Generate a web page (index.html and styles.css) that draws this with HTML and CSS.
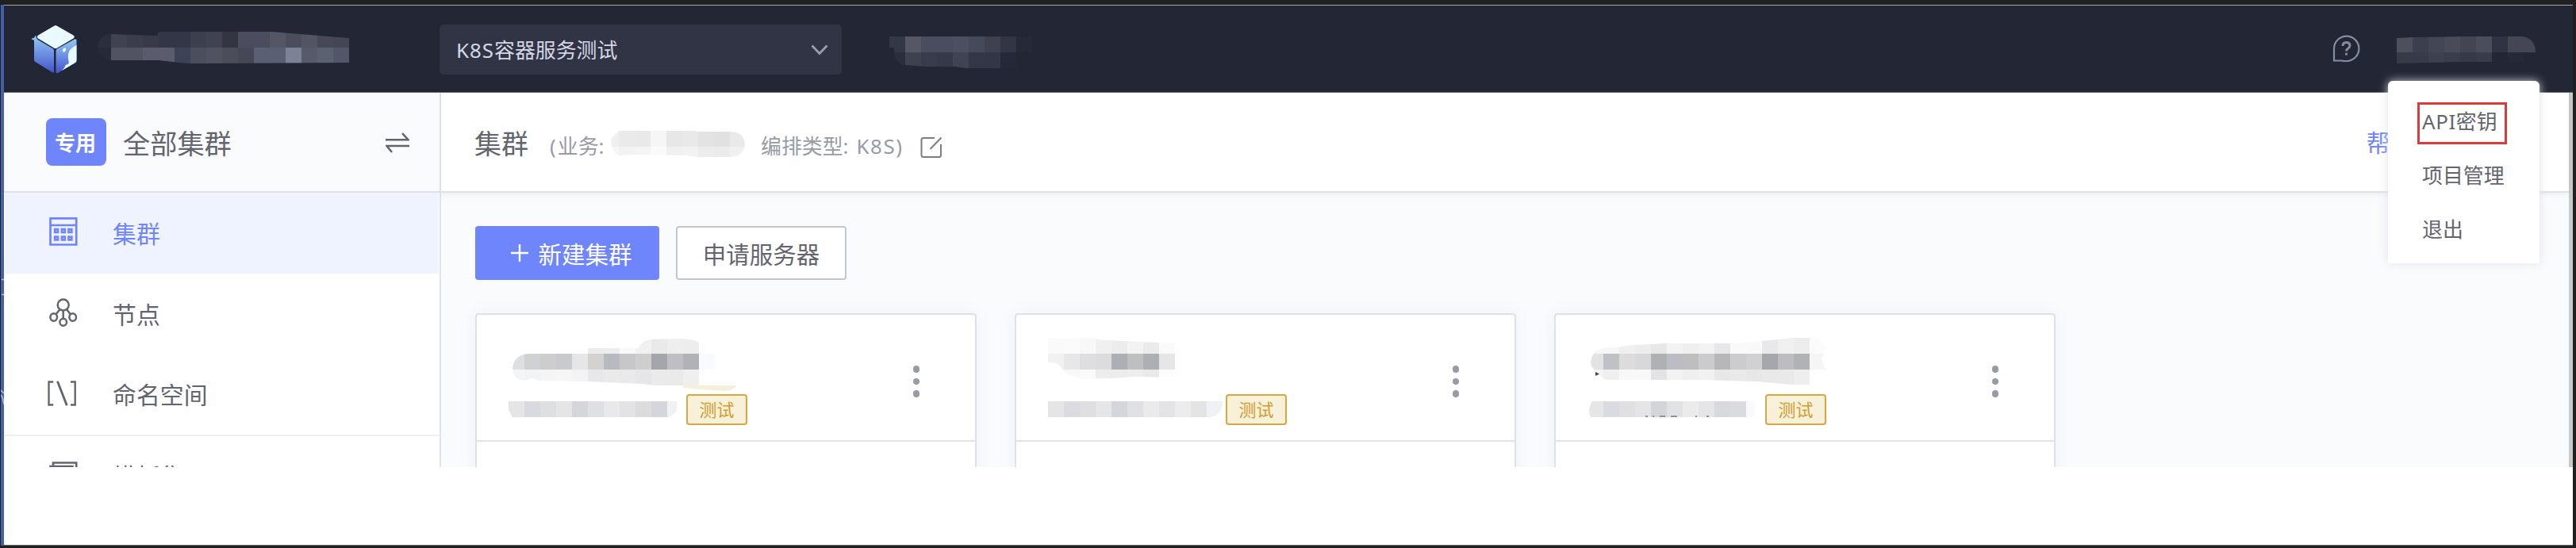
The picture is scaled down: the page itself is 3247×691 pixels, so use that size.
FILE: index.html
```html
<!DOCTYPE html>
<html lang="zh-CN">
<head>
<meta charset="utf-8">
<title>K8S容器服务</title>
<link rel="stylesheet" href="styles.css">
</head>
<body>
<div class="frame">
  <div class="edge">
    <svg width="5" height="681" viewBox="0 0 5 681" fill="none" stroke="#b9c3de" stroke-width="1.5"><path d="M1 346.500H5M1 365.500H5M0 486L4 490M0 492Q3 495 3 500L5 506"/></svg>
  </div>
  <div class="app">
    <header class="topbar">
      <svg class="logo" width="58" height="62" viewBox="0 0 58 62">
        <defs><linearGradient id="lf" x1="0" y1="0" x2="0" y2="1"><stop offset="0" stop-color="#93c8f7"/><stop offset=".5" stop-color="#6c8fe2"/><stop offset="1" stop-color="#4454cd"/></linearGradient></defs>
        <path fill="#e9fbff" d="M29.500 1.500Q31 .5 33 1.700L53.500 13.500Q56 15.500 53.500 17.500L33 29.500Q31 30.700 29 29.500L9 17.500Q6.500 15.500 9 13.500Z"/>
        <path fill="url(#lf)" d="M6 13.500L7 17Q8.500 19.500 11 20.500L28 30.500Q29 31.500 29 33V59Q29 61.500 27 60.300L5.500 47Q4 46 4 44.500V20L0 18L4 16.500Z"/>
        <path fill="url(#lf)" d="M55 18.500Q57.500 17.500 57.500 20V45Q57.500 47 56 48L34 61Q31.500 62 31.500 59.500V33Q31.500 31.500 33 30.500Z"/>
        <path fill="#e9fbff" d="M57.500 26V45Q57.500 47 56 48L39 58Q43 54 43.500 51Q49 50 47.500 46Q45.500 37 49.500 31.500Q52.500 28 57.500 26Z"/>
        <ellipse cx="42" cy="32" rx="1.900" ry="2.800" fill="#e9fbff" transform="rotate(25 42 32)"/>
      </svg>
      <svg class="mosaic product-name" data-mosaic="product"></svg>
      <div class="project-select"><span><span class="latin">K8S</span>容器服务测试</span>
        <svg width="22" height="14" viewBox="0 0 22 14" fill="none" stroke="#9a9daa" stroke-width="2.800"><path d="M1.500 1.500L11 11.500L20.500 1.500"/></svg>
      </div>
      <svg class="mosaic nav-name" data-mosaic="nav"></svg>
      <svg class="help" width="35" height="35" viewBox="0 0 35 35" fill="none" stroke="#858da3" stroke-width="2.200"><path d="M2 32.500V17A15.700 15.700 0 1 1 17.500 33H14L12 32.500Z"/><path stroke-width="3" d="M13 14Q13 9.500 17.500 9.500T22 13.500Q22 15.500 19.500 17.200Q17.500 18.500 17.500 20.500M17.500 22.800V25.500"/></svg>
      <svg class="mosaic user-name" data-mosaic="user"></svg>
    </header>
    <div class="main">
      <aside class="sidebar">
        <div class="side-head">
          <span class="badge">专用</span><span class="side-title">全部集群</span>
          <svg width="30" height="26" viewBox="0 0 30 26" fill="none" stroke="#63656e" stroke-width="2.500"><path d="M0 9.200H28.500L21 1M30 17H1.500L8 25"/></svg>
        </div>
        <nav>
          <a class="item active">
            <svg width="36" height="36" viewBox="0 0 36 36" fill="none" stroke="#6f85fb" stroke-width="2.700"><path d="M1.500 1.300H34.200V34.500H1.500ZM1.500 10H34.500"/><path d="M7.200 15.200h3.800v3.800h-3.800zM16 15.200h3.800v3.800h-3.800zM24.500 15.200h3.800v3.800h-3.800zM7.200 24.600h3.800v3.800h-3.800zM16 24.600h3.800v3.800h-3.800zM24.500 24.600h3.800v3.800h-3.800z"/></svg>
            <span>集群</span></a>
          <a class="item">
            <svg width="36" height="36" viewBox="0 0 36 36" fill="none" stroke="#63656e" stroke-width="2.500"><circle cx="17.700" cy="8.500" r="7"/><ellipse cx="5.700" cy="24" rx="4.300" ry="4.700"/><ellipse cx="29.700" cy="24" rx="4.300" ry="4.700"/><ellipse cx="17.700" cy="30.300" rx="4.300" ry="4.500"/><path d="M13.500 14L8.500 20.500M22 14L27 20.500M17.700 15.500V26"/></svg>
            <span>节点</span></a>
          <a class="item">
            <svg width="38" height="36" viewBox="0 0 38 36" fill="none" stroke="#63656e" stroke-width="2.500"><path d="M5.500 2.700H-.5V33.300H5.500M28.500 2.700H34.500V33.300H28.500"/><path stroke-width="3" d="M11 2L23.500 34"/></svg>
            <span>命名空间</span></a>
          <a class="item divided">
            <svg width="36" height="36" viewBox="0 0 36 36" fill="none" stroke="#63656e" stroke-width="2.600"><path d="M1.500 6V34.500H29.500V6ZM5 5.500V1.500H34.200V29H30"/></svg>
            <span>模板集</span></a>
        </nav>
      </aside>
      <section class="content">
        <div class="page-head">
          <h1>集群</h1>
          <span class="meta biz"><span class="latin">(</span>业务:</span>
          <svg class="mosaic biz-name" data-mosaic="biz"></svg>
          <span class="meta type">编排类型<span class="latin">: K8S)</span></span>
          <svg class="edit" width="28" height="28" viewBox="0 0 28 28" fill="none" stroke="#7a7d87" stroke-width="2"><path d="M18 2H4Q1.500 2 1.500 4.500V23.500Q1.500 26 4 26H23.500Q26 26 26 23.500V10M26.500 1.500L12.500 16"/></svg>
          <a class="guide">帮助</a>
        </div>
        <div class="actions">
          <button class="btn primary"><svg width="22" height="22" viewBox="0 0 22 22" stroke="#fff" stroke-width="2.400"><path d="M11 0V22M0 11H22"/></svg>新建集群</button>
          <button class="btn">申请服务器</button>
        </div>
        <div class="cards">
          <article class="card"><div class="card-head">
            <svg class="mosaic cluster-info" data-mosaic="c1"></svg><span class="tag">测试</span>
            <span class="dots"><i></i><i></i><i></i></span></div></article>
          <article class="card"><div class="card-head">
            <svg class="mosaic cluster-info" data-mosaic="c2"></svg><span class="tag">测试</span>
            <span class="dots"><i></i><i></i><i></i></span></div></article>
          <article class="card"><div class="card-head">
            <svg class="mosaic cluster-info" data-mosaic="c3"></svg><span class="tag">测试</span>
            <span class="dots"><i></i><i></i><i></i></span></div></article>
        </div>
      </section>
      <div class="scrollbar"></div>
    </div>
  </div>
</div>
<div class="user-menu">
  <a><span class="marked"><span class="api">API</span>密钥</span></a>
  <a>项目管理</a>
  <a>退出</a>
</div>
<script src="mosaic.js"></script>
</body>
</html>
```

FILE: styles.css
```css
* { box-sizing: border-box; }
body {
  margin: 0; width: 3247px; height: 691px; overflow: hidden; position: relative;
  background: #202020; color: #63656e;
  font-family: "Noto Sans", "Noto Sans CJK SC", sans-serif;
}
svg { display: block; flex: none; }
.frame { display: flex; padding: 6px 4px 3px 1px; height: 691px; }
.edge { width: 4px; flex: none; background: #4560a8; overflow: hidden; }
.app { flex: 1; min-width: 0; background: #fff; border-top: 1px solid #a5a6ae; border-bottom: 1px solid #666; }
.topbar { height: 110px; background: #232634; display: flex; align-items: flex-start; border-bottom: 1px solid #6d6f7a; }
.logo { margin: 24px 0 0 34px; }
.product-name { margin: 33px 0 0 26px; }
.project-select {
  margin: 24px 0 0 111px; width: 507px; height: 63px; border-radius: 5px; background: #313445;
  display: flex; align-items: center; justify-content: space-between; padding: 0 17px 0 21px;
  font-size: 25.9px; color: #d5d8e4; line-height: 40px;
}
.latin { letter-spacing: 1px; }
.nav-name { margin: 39px 0 0 60px; }
.help { margin: 37px 0 0 auto; }
.user-name { margin: 39px 47px 0 46px; }

.main { height: 472px; display: flex; overflow: hidden; }
.sidebar { width: 551px; flex: none; border-right: 2px solid #e2e4ec; background: #fff; }
.side-head { height: 126px; border-bottom: 2px solid #e0e2e9; background: #fafbfd; display: flex; align-items: center; padding: 0 38px 0 53px; }
.side-head svg { margin-top: 1px; }
.badge { width: 76px; height: 60px; border-radius: 8px; background: #6f85fb; color: #fff; font-weight: 700; font-size: 26px; line-height: 60px; text-align: center; padding: 1px 2px 0 0; }
.side-title { margin: 3px auto 0 21px; font-size: 34.2px; line-height: 50px; }
.item { display: flex; align-items: center; height: 101.7px; padding-left: 56px; font-size: 29.9px; margin-left: 1px; margin-right: 1px; }
.item svg { margin-top: -3px; width: 36px; overflow: visible; }
.item span { margin: 2px 0 0 44px; line-height: 44px; }
.active { background: #eff3ff; color: #6f85fb; }
.divided { border-top: 2px solid #eff0f6; height: 106px; }
.divided svg { margin-top: -4px; }
.divided span { margin-top: -2px; }

.content { flex: 1; min-width: 0; background: #fafbfd; }
.page-head { height: 126px; background: #fff; border-bottom: 2px solid #dfe1e9; box-shadow: 0 3px 6px rgba(60,70,100,.07); display: flex; align-items: center; padding-left: 42px; position: relative; }
h1 { margin: 3px 0 0; font-size: 34px; font-weight: 400; line-height: 50px; }
.meta { font-size: 25.9px; color: #979ba5; line-height: 40px; margin-top: 9px; white-space: nowrap; }
.biz { margin-left: 27px; width: 77px; }
.biz .latin { letter-spacing: 2px; }
.biz-name { margin-right: 20px; margin-top: 6px; }
.type { width: 178px; }
.type .latin { letter-spacing: 1.6px; }
.edit { margin: 14px 0 0 23px; }
.guide { margin: 1px 196px 0 auto; color: #6f85fb; font-size: 29.7px; line-height: 44px; }
.actions { display: flex; gap: 21px; padding: 42px 0 0 43px; }
.btn { height: 68px; width: 215px; border: 2px solid #c4c6cc; border-radius: 4px; background: #fff; color: #63656e; font: 29.5px/44px "Noto Sans", "Noto Sans CJK SC", sans-serif; display: flex; align-items: center; justify-content: center; padding: 3px 0 0; }
.btn.primary { width: 232px; background: #6f85fb; border-color: #6f85fb; color: #fff; gap: 12px; padding-left: 11px; }
.btn svg { margin-top: -3px; }
.cards { display: grid; grid-template-columns: repeat(3, 632px); gap: 48px; padding: 42px 0 0 43px; }
.card { height: 260px; background: #fff; border: 2px solid #e0e1e8; border-radius: 4px; box-shadow: 0 0 24px rgba(70,85,130,.06); }
.card-head { height: 160px; border-bottom: 2px solid #e2e3e9; display: flex; padding-left: 40px; }
.cluster-info { margin-top: 23px; }
.tag { margin: 100px 0 0 -36px; width: 77px; height: 39px; border: 2px solid #d9a741; border-radius: 4px; background: #f8f1d9; color: #d29b2d; font-size: 22px; line-height: 35px; text-align: center; }
.dots { margin: 64px 70px 0 auto; display: flex; flex-direction: column; gap: 7.200px; }
.dots i { width: 8.500px; height: 8.500px; border-radius: 50%; background: #979ba5; }
.scrollbar { width: 5px; flex: none; background: #c9c9c9; }

.user-menu { position: absolute; left: 3010px; top: 102px; width: 191px; height: 230px; padding-top: 18px; background: #fff; border-radius: 6px 6px 2px 2px; box-shadow: 0 0 12px rgba(222,224,232,.9); font-size: 25.9px; }
.user-menu a { display: flex; align-items: center; height: 67.5px; padding-left: 43px; line-height: 40px; }
.marked { margin-left: -6px; margin-top: 3px; width: 113px; height: 53px; border: 3px solid #dd3a3a; padding: 0 0 0 3px; line-height: 42px; white-space: nowrap; }
.api { letter-spacing: .6px; }
```

FILE: mosaic.js
```js
// Each masked label: viewBox, outline of the brush stroke, rows of cells [x, y, height, colours].
const masks = {
  product: { box: [123, 40, 320, 42], clip: 'M123 60Q124 43 142 43L198 45L200 40H342L440 48V79L235 80L200 76L140 76Q124 74 123 60Z', rows: [
    [120, 40, 20, '#2b2e3e #404251 #3b3d4c #373a49 #333646 #333646 #3c3f4d #3f424f #333640 #4b4d5f #4b4d5f #545663 #4b4d5a #525464 #464856 #444654'],
    [120, 60, 20, '#262938 #515363 #515363 #5a5c6d #5a5c6d #3e4257 #4b4e5c #505260 #4b4d5b #454854 #5b5f73 #5b5f73 #7d8196 #575a6b #5b6170 #53566a #5f606e']] },
  nav: { box: [1121, 46, 180, 40], clip: 'M1121 46H1301V66H1281V86H1217L1205 84H1166L1141 82Q1128 80 1127 66V60H1121Z', rows: [
    [1121, 46, 20, '#343747 #555766 #4a4c60 #4a4c60 #4c4e62 #464959 #3f4150 #323546 #262937'],
    [1121, 66, 20, '#2b2f3c #3c424e #393c4c #363949 #404354 #343748 #333646 #242839 #232634']] },
  user: { box: [3021, 46, 175, 34], clip: 'M3021 48L3041 47L3103 46H3180Q3196 49 3196 66L3182 78H3103L3021 80Z', rows: [
    [3021, 46, 20, '#4d4f5d #3c3f4f #434654 #494b59 #434552 #4b4d5a #303344 #444753 #444753'],
    [3021, 66, 14, '#373a47 #373a48 #3d4051 #3a3d4b #363947 #393c49 #232634 #262938 #232634']] },
  biz: { box: [771, 166, 169, 34], clip: 'M781 166H878L879 167H922Q938 167 940 183Q938 199 920 199H880L866 197L801 196L780 197Q771 192 771 176Z', rows: [
    [761, 166, 20, '#efefef #eaeaea #e9e9e9 #f5f6f5 #e7e7e7 #e9e9e9 #e3e3e4 #e1e1e1 #e9e9ea'],
    [761, 186, 14, '#f6f6f6 #f2f2f2 #f4f4f4 #fafafa #eff1f0 #f2f2f2 #ececed #ebebeb #eff0f3']] },
  c1: { box: [641, 420, 260, 120], clip: 'M646 466Q647 448 665 446H741V439H804Q810 429 820 428L860 427Q876 428 881 432V446H901V466H881V486H929Q924 493 914 493L883 491L861 489V486H826L810 484L740 481L680 480L672 477L660 480Q647 478 646 466ZM641 506H853Q856 523 842 526H646L641 517Z', rows: [
    [641, 426, 20, '#fff #fff #fff #fff #fff #ececed #ededef #f9f9f9 #f1f1f1 #e9e9e9 #eeeeef #ededed #fff'],
    [641, 446, 20, '#dedfe0 #d0d1d2 #cdcdcd #c9cace #e6e6e9 #d4d1d1 #b8bac1 #c7c7c9 #cececf #a5a6ac #bebec4 #b1b2b7 #f9fafd'],
    [641, 466, 20, '#f5f5f5 #f2f3f4 #f4f5f4 #f6f6f7 #f3f3f3 #e8e8ea #eaeaea #e9e9eb #e6e6e8 #eaeaea #eaeaea #efefef #fff'],
    [861, 486, 10, '#f6efdc #f6efdc #f6efdc #f6efdc'],
    [641, 506, 20, '#e5e5e6 #d9dadf #dedfe0 #e5e5e6 #d5d6db #dfe0e3 #e9e9eb #e3e3e6 #dcdcdd #d5d6db #f0f1f4']] },
  c2: { box: [1321, 420, 260, 120], clip: 'M1321 427L1370 426L1395 429L1481 433V476L1430 475L1400 477L1362 478L1352 473Q1340 472 1337 462Q1334 457 1321 457ZM1321 506H1541Q1541 524 1525 526H1321Z', rows: [
    [1321, 426, 20, '#fafafa #fbfbfb #f7f9f8 #f0f0f0 #ececed #f3f3f3 #ebebeb #fafafa'],
    [1321, 446, 20, '#f1f1f1 #e7e7e7 #dedee1 #dcdcdf #aeafb4 #bfbfc1 #aeafb4 #e6e6e6'],
    [1321, 466, 20, '#fff #f8f8f8 #fafafa #ededed #ececec #ededed #e9e9e9 #fdfdfd'],
    [1321, 506, 20, '#e5e5e6 #dbdce1 #dfdfe2 #e6e6e9 #d5d6db #e0e0e4 #eaeaeb #e4e4e7 #ececec #e4e4e6 #f0f1f4']] },
  c3: { box: [2001, 420, 260, 120], clip: 'M2005 455Q2008 440 2023 439L2060 435L2100 433H2180L2221 430L2260 426H2281Q2301 426 2301 440L2296 453L2301 466H2281V485H2258L2215 481L2140 479H2028Q2018 478 2013 469Q2004 463 2005 455ZM2007 506H2210Q2215 516 2210 526H2005Q2000 516 2007 506Z', rows: [
    [2001, 426, 20, '#f6f6f6 #f6f6f6 #f0f0f0 #ededed #e7e7e7 #f3f3f3 #efefef #f2f2f2 #e7e7e9 #f9f9f9 #f9f9f9 #e8e8ea #f0f0f0 #ededed #fcfcfc'],
    [2001, 446, 20, '#e3e3e4 #c0c1c6 #dcdcdd #d8d8db #b0b1b5 #bdbcc2 #bebec0 #cbcbcd #b7b7ba #cccccf #d1d1d3 #a6a7ac #bdbcc2 #b1b2b6 #f5f5f6'],
    [2001, 466, 20, '#f4f4f4 #efefef #f8f8f8 #f8f8f8 #e3e3e6 #f2f2f2 #efefef #f1f1f1 #e8e8e8 #e9e9e9 #e7e7e7 #e9e9e9 #e9e9e9 #eee #fff'],
    [2001, 506, 20, '#e6e6e7 #dadbe0 #e0e0e2 #e5e5e8 #d4d5d9 #e2e2e5 #ebebec #e5e5e8 #d8d9de #dadbe0 #f8faf9']],
    extra: '<path fill="#3f414a" d="M2011 469l5 2.500l-5 2.500z"/><path stroke="#8f929c" stroke-width="2" fill="none" d="M2074 525h3M2083 525h2M2092 525h7M2106 525h8M2137 525h2M2151 525h3"/>' }
};
let id = 0;
for (const svg of document.querySelectorAll('[data-mosaic]')) {
  const m = masks[svg.dataset.mosaic], [x, y, w, h] = m.box, clip = 'mask' + id++;
  svg.setAttribute('viewBox', m.box.join(' '));
  svg.setAttribute('width', w);
  svg.setAttribute('height', h);
  const cells = m.rows.map(([cx, cy, ch, colours]) => colours.split(' ').map((c, i) =>
    `<rect x="${cx + i * 20}" y="${cy}" width="20" height="${ch}" fill="${c}"/>`).join('')).join('');
  svg.innerHTML = `<clipPath id="${clip}"><path d="${m.clip}"/></clipPath><g clip-path="url(#${clip})" shape-rendering="crispEdges">${cells}</g>${m.extra || ''}`;
  svg.style.overflow = 'visible';
}
```
